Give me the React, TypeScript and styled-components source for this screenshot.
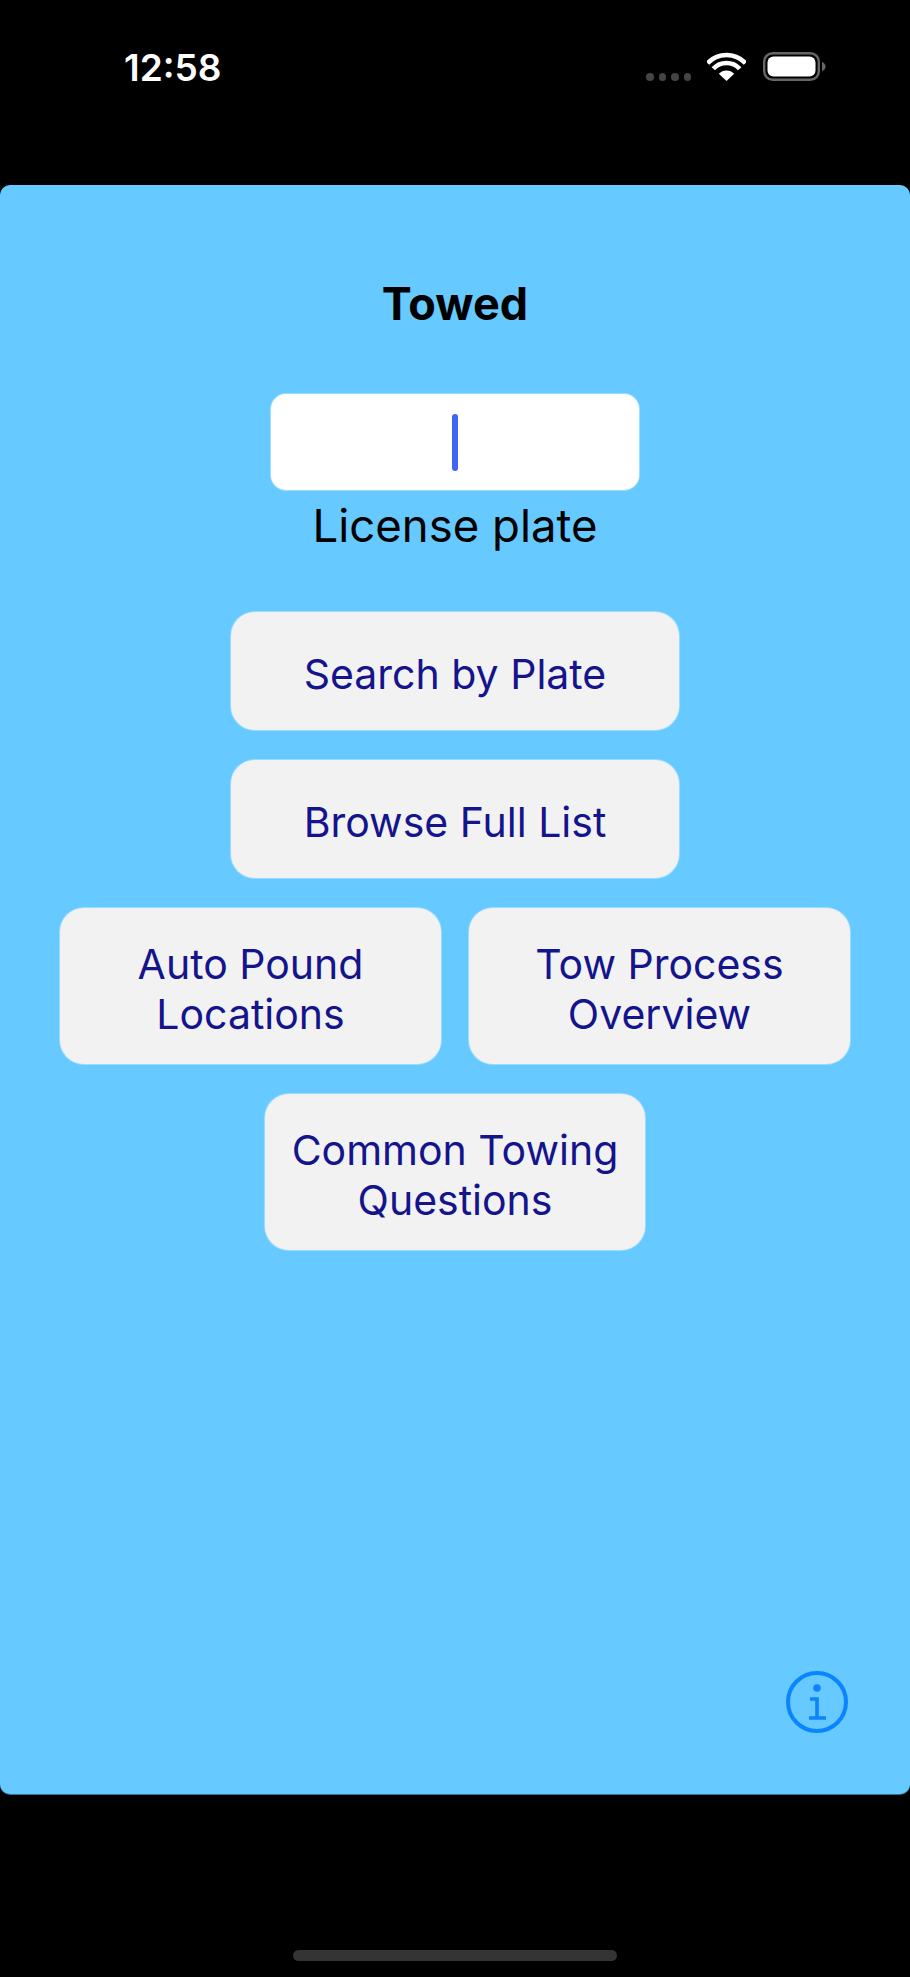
import React from "react";
import styled, { createGlobalStyle } from "styled-components";

const Global = createGlobalStyle`
  html, body {
    margin: 0;
    padding: 0;
    background: #000;
    overflow: hidden;
  }
`;

const Screen = styled.div`
  width: 910px;
  height: 1977px;
  display: flex;
  flex-direction: column;
  background: #000;
  font-family: Inter, "Liberation Sans", sans-serif;
`;

const StatusBar = styled.div`
  height: 185px;
  box-sizing: border-box;
  padding: 48px 84px 0 124px;
  display: flex;
  align-items: flex-start;
  justify-content: space-between;
`;

const Time = styled.div`
  color: #fff;
  font-size: 37px;
  font-weight: 600;
  line-height: 40px;
`;

const StatusIcons = styled.div`
  display: flex;
  align-items: flex-start;
  margin-top: 4px;
`;

const Dots = styled.div`
  display: flex;
  gap: 5px;
  margin: 21px 16px 0 0;
`;

const Dot = styled.span`
  width: 7.5px;
  height: 7.5px;
  border-radius: 50%;
  background: #444;
`;

const Panel = styled.div`
  height: 1609px;
  box-sizing: border-box;
  padding: 95px 60px 59px;
  display: flex;
  flex-direction: column;
  align-items: center;
  background: #66c9ff;
  border-radius: 10px;
  box-shadow: 0 1px 0 #2f6f92;
`;

const Title = styled.h1`
  margin: 0;
  color: #000;
  font-size: 45px;
  font-weight: 700;
  line-height: 48px;
`;

const PlateInput = styled.div`
  width: 368px;
  height: 96px;
  margin-top: 66px;
  display: flex;
  align-items: center;
  justify-content: center;
  background: #fff;
  border-radius: 15px;
  box-shadow: 0 0 0 1px rgba(255, 255, 255, 0.35);
`;

const Caret = styled.span`
  width: 6px;
  height: 57px;
  border-radius: 3px;
  background: #3f66f2;
`;

const PlateLabel = styled.div`
  margin-top: 8px;
  color: #000;
  font-size: 45.5px;
  font-weight: 400;
  line-height: 56px;
`;

const Actions = styled.div`
  margin-top: 58px;
  display: flex;
  flex-direction: column;
  align-items: center;
  gap: 30px;
`;

const ActionRow = styled.div`
  display: flex;
  gap: 28px;
`;

const ActionButton = styled.button<{ $w: number; $h: number }>`
  width: ${(p) => p.$w}px;
  height: ${(p) => p.$h}px;
  padding: 5px 0 0;
  border: none;
  border-radius: 24px;
  background: #f2f2f2;
  box-shadow: 0 0 0 1px rgba(255, 255, 255, 0.35);
  color: #14148c;
  font-family: inherit;
  font-size: 41px;
  font-weight: 400;
  line-height: 50px;
  text-align: center;
`;

const Footer = styled.div`
  margin-top: auto;
  align-self: stretch;
  display: flex;
  justify-content: flex-end;
`;

const InfoButton = styled.div`
  width: 66px;
  height: 66px;
`;

const BottomArea = styled.div`
  flex: 1;
  display: flex;
  justify-content: center;
  align-items: flex-start;
  padding-top: 156px;
`;

const HomeIndicator = styled.div`
  width: 324px;
  height: 11px;
  border-radius: 6px;
  background: #343434;
`;

const WifiIcon = () => (
  <svg width="39" height="29" viewBox="0 0 39 29" fill="none" style={{ marginRight: 17 }}>
    <path d="M.5 11.3A26 26 0 0 1 38.5 11.3" stroke="#fff" strokeWidth="4.6" />
    <path d="M6.3 16.7A18 18 0 0 1 32.7 16.7" stroke="#fff" strokeWidth="4.6" />
    <path d="M19.5 29L11.8 21.8A10.5 10.5 0 0 1 27.2 21.8Z" fill="#fff" />
  </svg>
);

const BatteryIcon = () => (
  <svg width="63" height="29" viewBox="0 0 63 29" fill="none">
    <rect x="1.2" y="1.2" width="54.6" height="26.6" rx="8.5" stroke="#666" strokeWidth="2.4" />
    <rect x="4.5" y="4.5" width="48" height="20" rx="6" fill="#fff" />
    <path d="M59 10C61.5 11 62.5 12.5 62.5 14.5C62.5 16.5 61.5 18 59 19Z" fill="#666" />
  </svg>
);

const InfoIcon = () => (
  <svg width="66" height="66" viewBox="0 0 66 66" fill="none" stroke="#0a84ff">
    <circle cx="33" cy="33" r="29" strokeWidth="4" />
    <circle cx="33" cy="19" r="3.8" fill="#0a84ff" stroke="none" />
    <path d="M26 30H33V49M25 49H42" strokeWidth="3.6" />
  </svg>
);

export default function App() {
  return (
    <Screen>
      <Global />
      <StatusBar>
        <Time>12:58</Time>
        <StatusIcons>
          <Dots>
            <Dot />
            <Dot />
            <Dot />
            <Dot />
          </Dots>
          <WifiIcon />
          <BatteryIcon />
        </StatusIcons>
      </StatusBar>
      <Panel>
        <Title>Towed</Title>
        <PlateInput>
          <Caret />
        </PlateInput>
        <PlateLabel>License plate</PlateLabel>
        <Actions>
          <ActionButton $w={448} $h={118}>Search by Plate</ActionButton>
          <ActionButton $w={448} $h={118}>Browse Full List</ActionButton>
          <ActionRow>
            <ActionButton $w={381} $h={156}>Auto Pound<br />Locations</ActionButton>
            <ActionButton $w={381} $h={156}>Tow Process<br />Overview</ActionButton>
          </ActionRow>
          <ActionButton $w={380} $h={156}>Common Towing<br />Questions</ActionButton>
        </Actions>
        <Footer>
          <InfoButton>
            <InfoIcon />
          </InfoButton>
        </Footer>
      </Panel>
      <BottomArea>
        <HomeIndicator />
      </BottomArea>
    </Screen>
  );
}
